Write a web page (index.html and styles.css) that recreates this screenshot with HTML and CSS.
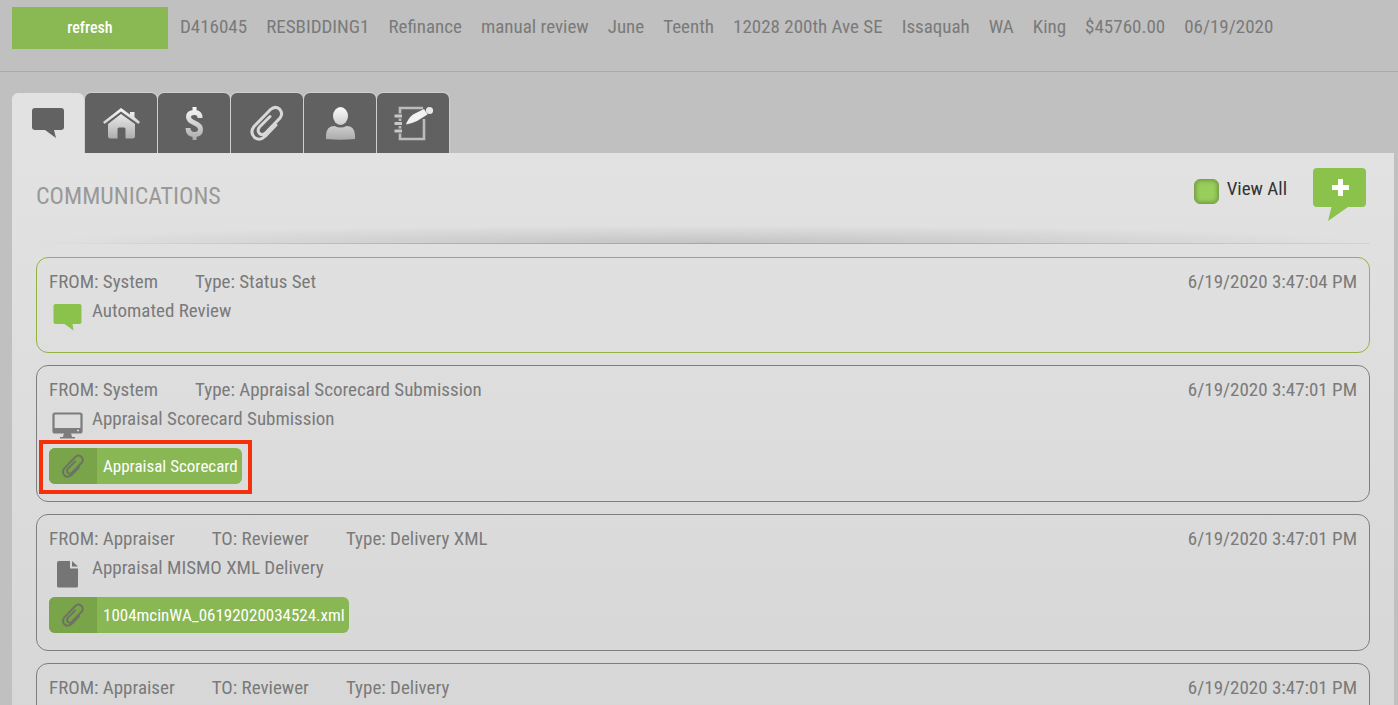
FILE: index.html
```html
<!DOCTYPE html>
<html lang="en">
<head>
    <meta charset="UTF-8">
    <meta name="viewport" content="width=device-width, initial-scale=1.0">
    <title>Communications</title>
    <link rel="stylesheet" href="styles.css">
</head>
<body>
    <!-- shared icon shapes -->
    <svg class="defs" width="0" height="0" aria-hidden="true">
        <defs>
            <linearGradient id="silver" x1="0" y1="0" x2="0" y2="36" gradientUnits="userSpaceOnUse">
                <stop offset="0" stop-color="#ffffff"/>
                <stop offset="1" stop-color="#a8a8a8"/>
            </linearGradient>
            <symbol id="clip" viewBox="0 0 36 36">
                <path d="M27 20L16.500 31Q11 36.500 5.500 32.500Q0.500 27.500 5 21.500L21.500 4.500Q26 0.500 30.500 4Q34.500 8.500 31 13L16 28.500Q12.500 31 10 28Q8 25 10.500 22L21 11.500" fill="none" stroke-linecap="round"/>
            </symbol>
        </defs>
    </svg>

    <header class="order-bar">
        <button type="button" class="refresh">refresh</button>
        <span>D416045</span>
        <span>RESBIDDING1</span>
        <span>Refinance</span>
        <span>manual review</span>
        <span>June</span>
        <span>Teenth</span>
        <span>12028 200th Ave SE</span>
        <span>Issaquah</span>
        <span>WA</span>
        <span>King</span>
        <span>$45760.00</span>
        <span>06/19/2020</span>
    </header>

    <main class="content">
        <nav class="tabs">
            <button type="button" class="tab active" aria-label="Communications">
                <svg width="36" height="36" viewBox="0 0 36 36"><path d="M5 3H31Q34 3 34 6V22Q34 25 31 25H24L26 33L15 25H5Q2 25 2 22V6Q2 3 5 3Z" fill="#626262"/></svg>
            </button>
            <button type="button" class="tab" aria-label="Property">
                <svg width="36" height="36" viewBox="0 0 36 36" fill="url(#silver)">
                    <path d="M18 3L0 17L1.500 19L18 6.500L35.500 19L37 17L31.500 12V7H27V9.500Z"/>
                    <path d="M18 9L5 19V31Q5 33.500 7.500 33.500H14.500V24Q14.500 22.500 16 22.500H21Q22.500 22.500 22.500 24V33.500H29.500Q32 33.500 32 31V19Z"/>
                </svg>
            </button>
            <button type="button" class="tab" aria-label="Fees">
                <svg width="36" height="36" viewBox="0 0 36 36" fill="none" stroke="url(#silver)">
                    <path d="M24 13Q24 7.500 18.500 7.500Q12.500 7.500 12.500 12Q12.500 15.500 18.500 18Q24.500 20.500 24.500 24.500Q24.500 29.500 18.500 29.500Q12 29.500 12 23" stroke-width="5"/>
                    <path d="M18.500 2L18.600 8M18.500 29L18.600 35" stroke-width="4"/>
                </svg>
            </button>
            <button type="button" class="tab" aria-label="Attachments">
                <svg class="clip-light" width="36" height="36"><use href="#clip"/></svg>
            </button>
            <button type="button" class="tab" aria-label="Contacts">
                <svg width="36" height="36" viewBox="0 0 36 36" fill="url(#silver)">
                    <ellipse cx="18.500" cy="11" rx="7.500" ry="9"/>
                    <path d="M4 34V30Q4.500 21 12.500 21Q18.500 24 24.500 21Q32.500 21 33 30V34Q18.500 35.500 4 34Z"/>
                </svg>
            </button>
            <button type="button" class="tab" aria-label="Notes">
                <svg width="40" height="36" viewBox="0 0 40 36">
                    <path d="M30 3H7V34H31V14" fill="none" stroke="#bcbcbc" stroke-width="2.600"/>
                    <path d="M1.500 11H9M1.500 18.500H9M1.500 26H9" stroke="#616161" stroke-width="5"/>
                    <path d="M1.500 11H9M1.500 18.500H9M1.500 26H9" stroke="#c8c8c8" stroke-width="3"/>
                    <path d="M13 19.500Q15 13.500 20 9.500L31 4L34.500 9.500L24 16Q19 18.500 13 19.500Z" fill="#f2f2f2"/>
                    <circle cx="36.500" cy="5.500" r="3.600" fill="#e8e8e8"/>
                </svg>
            </button>
        </nav>

        <section class="panel">
            <div class="panel-head">
                <h1>COMMUNICATIONS</h1>
                <label class="view-all"><input type="checkbox"> <span>View All</span></label>
                <button type="button" class="add" aria-label="Add communication">
                    <svg width="54" height="54" viewBox="0 0 54 54">
                        <path d="M4 0H49Q53 0 53 4V35Q53 39 49 39H35L15 53L18.500 39H4Q0 39 0 35V4Q0 0 4 0Z" fill="#8bc24c"/>
                        <path d="M27.500 11V28M19 19.500H36" stroke="#fff" stroke-width="5"/>
                    </svg>
                </button>
            </div>

            <div class="messages">
                <article class="message new">
                    <div class="message-head">
                        <span>FROM: System</span>
                        <span>Type: Status Set</span>
                        <time>6/19/2020 3:47:04 PM</time>
                    </div>
                    <div class="message-body">
                        <svg width="36" height="36" viewBox="0 0 36 36"><path d="M6.500 7H30.500Q32.500 7 32.500 9V25Q32.500 27 30.500 27H23.500L24.500 33.500L15.500 27H6.500Q4.500 27 4.500 25V9Q4.500 7 6.500 7Z" fill="#8bc24c"/></svg>
                        <p>Automated Review</p>
                    </div>
                </article>

                <article class="message">
                    <div class="message-head">
                        <span>FROM: System</span>
                        <span>Type: Appraisal Scorecard Submission</span>
                        <time>6/19/2020 3:47:01 PM</time>
                    </div>
                    <div class="message-body">
                        <svg width="36" height="36" viewBox="0 0 36 36">
                            <rect x="4.500" y="8.500" width="28" height="19" rx="1.500" fill="none" stroke="#7c7c7c" stroke-width="2.200"/>
                            <path d="M4 23H33V28H4ZM15 28H22L23 32H26V33.500H11V32H14Z" fill="#7c7c7c"/>
                            <path d="M28 25.500H30" stroke="#ddd" stroke-width="1.500"/>
                        </svg>
                        <p>Appraisal Scorecard Submission</p>
                    </div>
                    <a href="#" class="attachment highlighted">
                        <span class="attachment-icon"><svg class="clip-dark" width="24" height="26"><use href="#clip"/></svg></span>
                        <span class="attachment-name">Appraisal Scorecard</span>
                    </a>
                </article>

                <article class="message">
                    <div class="message-head">
                        <span>FROM: Appraiser</span>
                        <span>TO: Reviewer</span>
                        <span>Type: Delivery XML</span>
                        <time>6/19/2020 3:47:01 PM</time>
                    </div>
                    <div class="message-body">
                        <svg width="36" height="36" viewBox="0 0 36 36"><path d="M10 7H21V14.500H29V32Q29 33.500 27.500 33.500H9.500Q8 33.500 8 32V9Q8 7 10 7ZM23 7L29 12.500H23Z" fill="#757575"/></svg>
                        <p>Appraisal MISMO XML Delivery</p>
                    </div>
                    <a href="#" class="attachment">
                        <span class="attachment-icon"><svg class="clip-dark" width="24" height="26"><use href="#clip"/></svg></span>
                        <span class="attachment-name">1004mcinWA_06192020034524.xml</span>
                    </a>
                </article>

                <article class="message">
                    <div class="message-head">
                        <span>FROM: Appraiser</span>
                        <span>TO: Reviewer</span>
                        <span>Type: Delivery</span>
                        <time>6/19/2020 3:47:01 PM</time>
                    </div>
                </article>
            </div>
        </section>
    </main>
</body>
</html>
```

FILE: styles.css
```css
* {
    box-sizing: border-box;
}
body {
    margin: 0;
    height: 100vh;
    display: flex;
    flex-direction: column;
    overflow: hidden;
    background-color: #c0c0c0;
    color: #7a7a7a;
    font-family: "Roboto Condensed", "Liberation Sans Narrow", Roboto, sans-serif;
    font-size: 19px;
    line-height: 28px;
}
button {
    padding: 0;
    border: none;
    font: inherit;
    cursor: pointer;
}
.defs {
    position: absolute;
}

/* order summary */
.order-bar {
    display: flex;
    flex-shrink: 0;
    gap: 19px;
    height: 72px;
    padding: 7px 12px 0;
    border-bottom: 1px solid #aaa;
    line-height: 40px;
    white-space: nowrap;
}
.refresh {
    width: 156px;
    height: 42px;
    margin-right: -7px;
    background-color: #8ab953;
    color: #fff;
    font-size: 16px;
    font-weight: 500;
}

/* tabs */
.content {
    flex: 1;
    display: flex;
    flex-direction: column;
    min-height: 0;
    padding: 21px 4px 0 12px;
}
.tabs {
    display: flex;
    gap: 1px;
}
.tab {
    display: flex;
    align-items: center;
    justify-content: center;
    width: 72px;
    height: 60px;
    border-radius: 6px 6px 0 0;
    background-color: #616161;
    box-shadow: 0 0 0 1px #cfcfcf;
}
.tab svg {
    overflow: visible;
}
.tab.active {
    background-color: #e2e2e2;
    box-shadow: none;
}
.clip-light {
    stroke: #d8d8d8;
    stroke-width: 3;
}
.clip-dark {
    overflow: visible;
    stroke: #6c7363;
    stroke-width: 3;
}

/* panel */
.panel {
    position: relative;
    flex: 1;
    min-height: 0;
    padding: 0 24px;
    background: linear-gradient(#e2e2e2, #d7d7d7);
}
.panel-head {
    display: flex;
    align-items: flex-start;
    height: 91px;
    padding: 15px 3px 0 0;
    border-bottom: 1px solid;
    border-image: linear-gradient(to right, transparent, #b0b0b0 30%, #a6a6a6 50%, #b0b0b0 70%, #d2d2d2) 1;
    background: radial-gradient(ellipse 50% 18px at 50% 100%, #c4c4c4, transparent);
}
.panel-head h1 {
    margin: 0 auto 0 0;
    color: #999;
    font-size: 24px;
    font-weight: 400;
    line-height: 56px;
}
.view-all {
    display: flex;
    align-items: center;
    gap: 8px;
    margin-right: 26px;
    color: #333;
    line-height: 42px;
}
.view-all input {
    appearance: none;
    width: 25px;
    height: 25px;
    margin: 4px 0 0;
    border: 1px solid #7da04c;
    border-radius: 6px;
    background-color: #9ace5c;
    box-shadow: inset 0 0 4px 1px #6f9c3e;
}
.add {
    height: 54px;
    background: none;
}

/* message cards */
.messages {
    display: flex;
    flex-direction: column;
    gap: 12px;
    padding-top: 13px;
}
.message {
    min-height: 96px;
    padding: 10px 12px 12px;
    border: 1px solid #7e7e7e;
    border-radius: 12px;
}
.message.new {
    border-color: #95b340;
}
.message-head {
    display: flex;
    gap: 37px;
}
.message-head time {
    margin-left: auto;
}
.message-body {
    display: flex;
    gap: 7px;
    height: 44px;
}
.message-body svg {
    margin-top: 1px;
}
.message-body p {
    margin: 1px 0 0;
}
.attachment {
    position: relative;
    display: inline-flex;
    height: 36px;
    margin-bottom: 5px;
    border-radius: 6px;
    background-color: #88b753;
    color: #fff;
    font-size: 17px;
    line-height: 37px;
    text-decoration: none;
    vertical-align: top;
}
.attachment-icon {
    display: flex;
    align-items: center;
    justify-content: center;
    width: 48px;
    border-radius: 6px 0 0 6px;
    background-color: #79a449;
}
.attachment-name {
    padding: 0 4px 0 6px;
}
.attachment.highlighted::after {
    content: "";
    position: absolute;
    inset: -8px -10px -10px;
    border: 4px solid #f4310b;
}
```
